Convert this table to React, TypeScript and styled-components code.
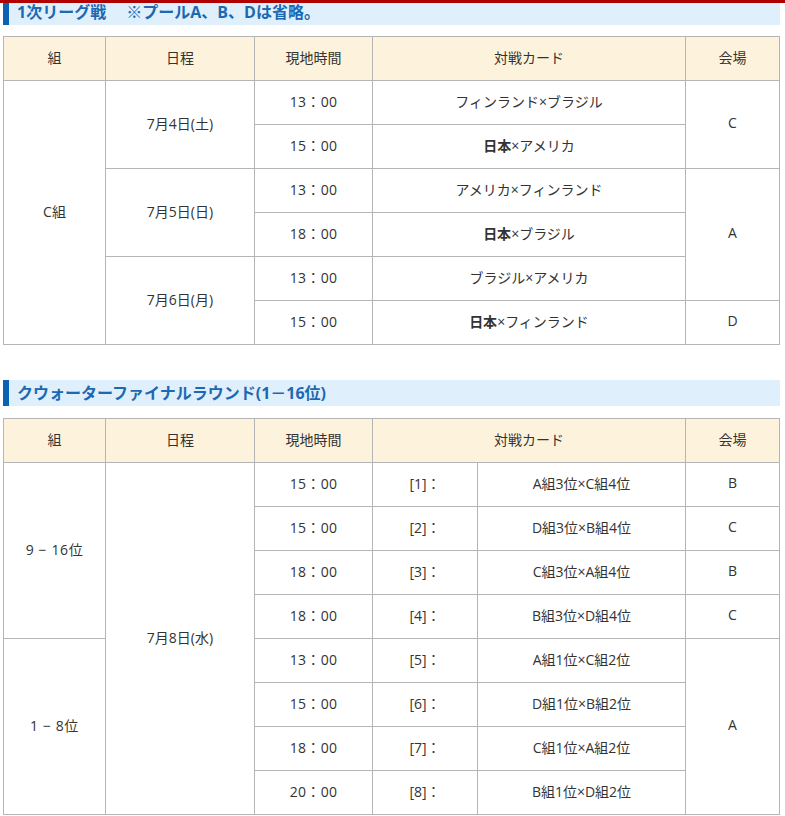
import React from "react";
import styled, { createGlobalStyle } from "styled-components";

const GlobalStyle = createGlobalStyle`
  html, body {
    margin: 0;
    padding: 0;
    overflow: hidden;
    background: #ffffff;
  }
  body {
    font-family: "Open Sans", "Noto Sans CJK JP", sans-serif;
    color: #333333;
  }
`;

const TopBar = styled.div`
  position: fixed;
  top: 0;
  left: 0;
  right: 0;
  height: 3px;
  background: #b00000;
  z-index: 10;
`;

const Page = styled.div`
  margin-top: -1px;
  padding: 0 5px 0 3px;
`;

const Heading = styled.h2<{ $gap: number }>`
  margin: 0 0 ${(p) => p.$gap}px;
  height: 26px;
  line-height: 26px;
  padding-left: 8px;
  border-left: 6px solid #0a62b4;
  background: #dff0fc;
  color: #1c68b3;
  font-size: 16px;
  font-weight: 700;
  white-space: pre;
`;

const Table = styled.table`
  width: 777px;
  border-collapse: collapse;
  table-layout: fixed;
  font-size: 14px;
  margin-bottom: 35px;

  th,
  td {
    border: 1px solid #b5b5b5;
    box-sizing: border-box;
    height: 44px;
    padding: 0 0 4px;
    text-align: center;
    vertical-align: middle;
    font-weight: 400;
  }

  th {
    background: #fdf3dc;
  }

  b {
    font-weight: 700;
  }
`;

const Col = styled.col<{ $w: number }>`
  width: ${(p) => p.$w}px;
`;

const Time = styled.span`
  letter-spacing: 0.3px;
`;

const Rank = styled.span`
  letter-spacing: 0.6px;
`;

const jp = (s: string) => (
  <>
    <b>日本</b>×{s}
  </>
);

const League = () => (
  <Table>
    <colgroup>
      <Col $w={102} />
      <Col $w={149} />
      <Col $w={118} />
      <Col $w={313} />
      <Col $w={94} />
    </colgroup>
    <thead>
      <tr>
        <th>組</th>
        <th>日程</th>
        <th>現地時間</th>
        <th>対戦カード</th>
        <th>会場</th>
      </tr>
    </thead>
    <tbody>
      <tr>
        <td rowSpan={6}>C組</td>
        <td rowSpan={2}>7月4日(土)</td>
        <td><Time>13：00</Time></td>
        <td>フィンランド×ブラジル</td>
        <td rowSpan={2}>C</td>
      </tr>
      <tr>
        <td><Time>15：00</Time></td>
        <td>{jp("アメリカ")}</td>
      </tr>
      <tr>
        <td rowSpan={2}>7月5日(日)</td>
        <td><Time>13：00</Time></td>
        <td>アメリカ×フィンランド</td>
        <td rowSpan={3}>A</td>
      </tr>
      <tr>
        <td><Time>18：00</Time></td>
        <td>{jp("ブラジル")}</td>
      </tr>
      <tr>
        <td rowSpan={2}>7月6日(月)</td>
        <td><Time>13：00</Time></td>
        <td>ブラジル×アメリカ</td>
      </tr>
      <tr>
        <td><Time>15：00</Time></td>
        <td>{jp("フィンランド")}</td>
        <td>D</td>
      </tr>
    </tbody>
  </Table>
);

type Game = { no: string; time: string; card: string; venue?: string; venueSpan?: number };

const QUARTER: Game[] = [
  { no: "[1]：", time: "15：00", card: "A組3位×C組4位", venue: "B" },
  { no: "[2]：", time: "15：00", card: "D組3位×B組4位", venue: "C" },
  { no: "[3]：", time: "18：00", card: "C組3位×A組4位", venue: "B" },
  { no: "[4]：", time: "18：00", card: "B組3位×D組4位", venue: "C" },
  { no: "[5]：", time: "13：00", card: "A組1位×C組2位", venue: "A", venueSpan: 4 },
  { no: "[6]：", time: "15：00", card: "D組1位×B組2位" },
  { no: "[7]：", time: "18：00", card: "C組1位×A組2位" },
  { no: "[8]：", time: "20：00", card: "B組1位×D組2位" },
];

const Quarter = () => (
  <Table>
    <colgroup>
      <Col $w={102} />
      <Col $w={149} />
      <Col $w={118} />
      <Col $w={105} />
      <Col $w={208} />
      <Col $w={94} />
    </colgroup>
    <thead>
      <tr>
        <th>組</th>
        <th>日程</th>
        <th>現地時間</th>
        <th colSpan={2}>対戦カード</th>
        <th>会場</th>
      </tr>
    </thead>
    <tbody>
      {QUARTER.map((g, i) => (
        <tr key={i}>
          {i === 0 && <td rowSpan={4}><Rank>9 − 16位</Rank></td>}
          {i === 4 && <td rowSpan={4}><Rank>1 − 8位</Rank></td>}
          {i === 0 && <td rowSpan={8}>7月8日(水)</td>}
          <td><Time>{g.time}</Time></td>
          <td>{g.no}</td>
          <td>{g.card}</td>
          {g.venue && <td rowSpan={g.venueSpan ?? 1}>{g.venue}</td>}
        </tr>
      ))}
    </tbody>
  </Table>
);

export default function App() {
  return (
    <>
      <GlobalStyle />
      <TopBar />
      <Page>
        <Heading $gap={11}>1次リーグ戦　 ※プールA、B、Dは省略。</Heading>
        <League />
        <Heading $gap={12}>クウォーターファイナルラウンド(1－16位)</Heading>
        <Quarter />
      </Page>
    </>
  );
}
